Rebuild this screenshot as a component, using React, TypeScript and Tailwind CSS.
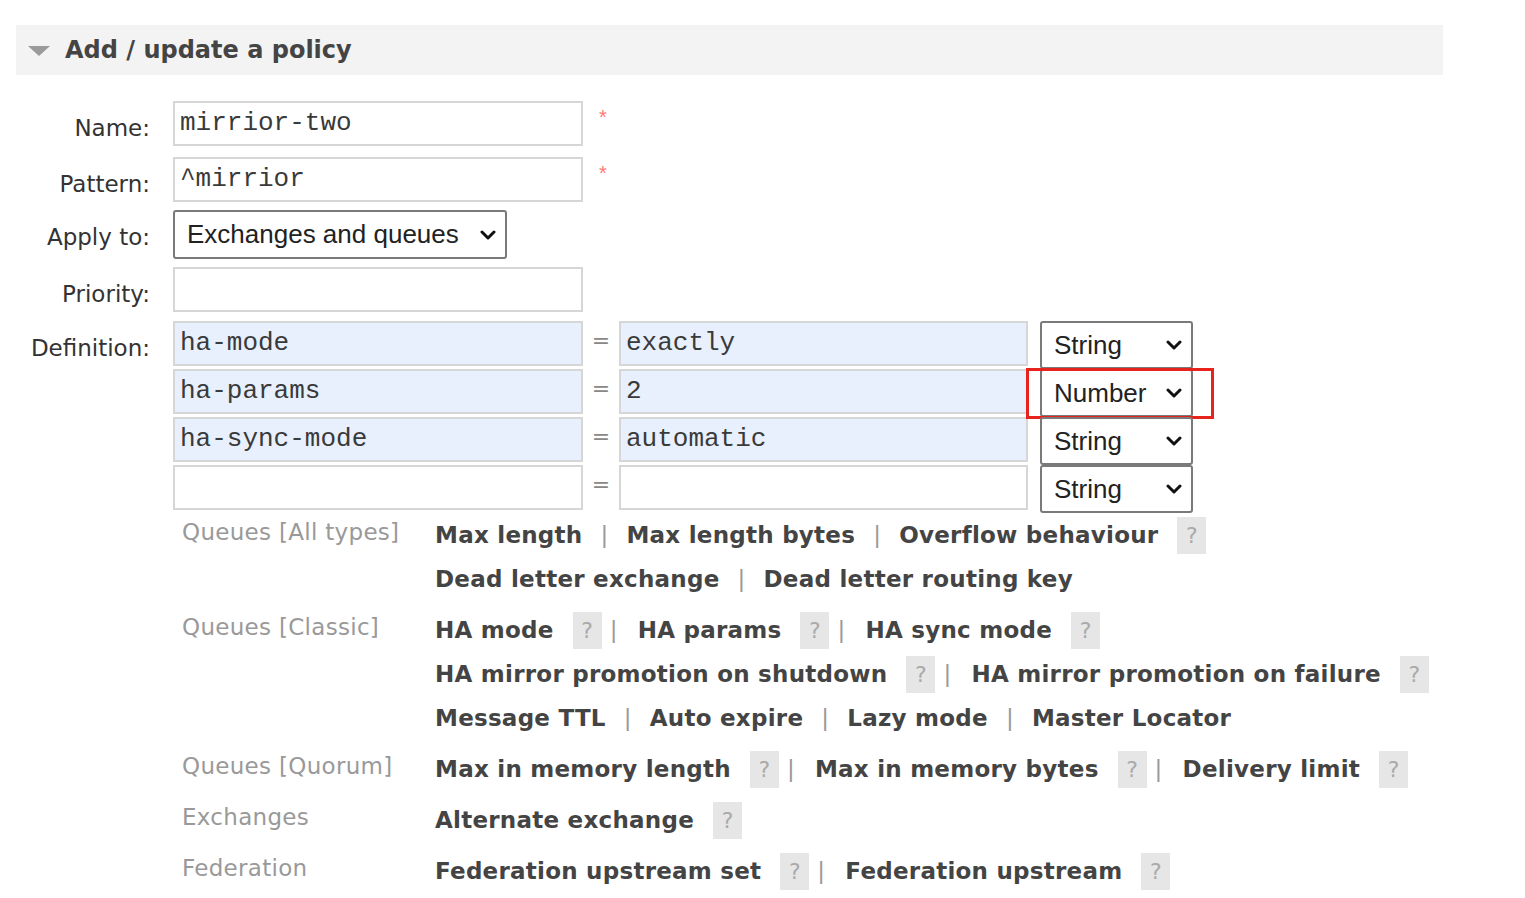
import React from 'react';

const sans = { fontFamily: '"DejaVu Sans", Verdana, sans-serif' };
const mono = { fontFamily: '"Liberation Mono", "Courier New", monospace' };
const arial = { fontFamily: '"Liberation Sans", Arial, sans-serif' };

function Field({ value = '', filled = false, width = 'w-[410px]' }: { value?: string; filled?: boolean; width?: string }) {
  return (
    <div
      className={`${width} h-[45px] border-2 border-[#d6d6d6] flex items-center px-[5px] text-[26px] text-[#3a3a3a] ${filled ? 'bg-[#e8f0fe]' : 'bg-white'}`}
      style={mono}
    >
      {value}
    </div>
  );
}

function Chevron() {
  return (
    <svg width="16" height="12" viewBox="0 0 16 12" className="shrink-0">
      <path d="M2 3 L8 9 L14 3" fill="none" stroke="#111" strokeWidth="3" strokeLinecap="round" strokeLinejoin="round" />
    </svg>
  );
}

function Select({ label, width, height = 'h-[48px]' }: { label: string; width: string; height?: string }) {
  return (
    <div
      className={`${width} ${height} border-2 border-[#7a7a7a] rounded-[3px] bg-white flex items-center justify-between pl-[12px] pr-[9px] text-[26px] text-[#222]`}
      style={arial}
    >
      <span>{label}</span>
      <Chevron />
    </div>
  );
}

function Help() {
  return (
    <span className="ml-[19px] inline-flex items-center justify-center w-[29px] h-[37px] bg-[#e6e6e6] text-[#aaa] text-[22px] font-normal tracking-normal">?</span>
  );
}

type Item = { t: string; h?: boolean };

function LinkLine({ items }: { items: Item[] }) {
  return (
    <div className="h-[44px] flex items-center text-[23px] font-bold text-[#444] whitespace-nowrap tracking-[0.25px]">
      {items.map((it, i) => (
        <React.Fragment key={it.t}>
          {i > 0 &&
            (items[i - 1].h ? (
              <span className="ml-[8px] mr-[20px] text-[#999] font-normal">|</span>
            ) : (
              <span className="mx-[18px] text-[#999] font-normal">|</span>
            ))}
          <span>{it.t}</span>
          {it.h && <Help />}
        </React.Fragment>
      ))}
    </div>
  );
}

function Group({ label, lines, first = false }: { label: string; lines: Item[][]; first?: boolean }) {
  return (
    <div className={`flex ${first ? '' : 'mt-[7px]'}`}>
      <div className="w-[253px] h-[38px] flex items-center text-[23px] text-[#999] tracking-[0.3px]">{label}</div>
      <div className="flex flex-col">
        {lines.map((l, i) => (
          <LinkLine key={i} items={l} />
        ))}
      </div>
    </div>
  );
}

function Row({ label, children, className = '' }: { label: string; children: React.ReactNode; className?: string }) {
  return (
    <div className={`flex items-start ${className}`}>
      <div className="w-[150px] text-right text-[23px] text-[#333] pt-[14px] leading-[27px]">{label}</div>
      <div className="ml-[23px]">{children}</div>
    </div>
  );
}

export default function App() {
  const defs = [
    { k: 'ha-mode', v: 'exactly', t: 'String' },
    { k: 'ha-params', v: '2', t: 'Number' },
    { k: 'ha-sync-mode', v: 'automatic', t: 'String' },
    { k: '', v: '', t: 'String' },
  ];

  return (
    <div className="w-[1525px] h-[898px] bg-white overflow-hidden" style={sans}>
      {/* Section header */}
      <div className="ml-[16px] mt-[25px] w-[1427px] h-[50px] bg-[#f3f3f3] flex items-center">
        <svg width="22" height="12" viewBox="0 0 22 12" className="ml-[12px] mt-[2px]">
          <path d="M0 1 L22 1 L11 11 Z" fill="#9a9a9a" />
        </svg>
        <span className="ml-[15px] text-[24px] font-bold text-[#444]">Add / update a policy</span>
      </div>

      {/* Form */}
      <div className="mt-[26px]">
        <Row label="Name:">
          <div className="flex items-start">
            <Field value="mirrior-two" />
            <span className="ml-[16px] text-[20px] text-[#f77] leading-[20px] mt-[6px]" style={arial}>*</span>
          </div>
        </Row>
        <Row label="Pattern:" className="mt-[11px]">
          <div className="flex items-start">
            <Field value="^mirrior" />
            <span className="ml-[16px] text-[20px] text-[#f77] leading-[20px] mt-[6px]" style={arial}>*</span>
          </div>
        </Row>
        <Row label="Apply to:" className="mt-[8px]">
          <Select label="Exchanges and queues" width="w-[334px]" height="h-[49px]" />
        </Row>
        <Row label="Priority:" className="mt-[8px]">
          <Field />
        </Row>
        <Row label="Definition:" className="mt-[9px]">
          <div className="flex flex-col">
            {defs.map((d, i) => (
              <div key={i} className="flex items-start h-[48px]">
                <Field value={d.k} filled={d.k !== ''} />
                <span className="w-[36px] text-center text-[22px] text-[#888] leading-[40px]">=</span>
                <Field value={d.v} filled={d.v !== ''} width="w-[409px]" />
                <div className="ml-[12px] relative">
                  <Select label={d.t} width="w-[153px]" />
                  {d.t === 'Number' && (
                    <div className="absolute left-[-14px] top-[-1px] w-[188px] h-[51px] border-[3px] border-[#e8221c]" />
                  )}
                </div>
              </div>
            ))}
          </div>
        </Row>

        {/* Help links */}
        <div className="ml-[182px] mt-[0px]">
          <Group
            first
            label="Queues [All types]"
            lines={[
              [{ t: 'Max length' }, { t: 'Max length bytes' }, { t: 'Overflow behaviour', h: true }],
              [{ t: 'Dead letter exchange' }, { t: 'Dead letter routing key' }],
            ]}
          />
          <Group
            label="Queues [Classic]"
            lines={[
              [{ t: 'HA mode', h: true }, { t: 'HA params', h: true }, { t: 'HA sync mode', h: true }],
              [{ t: 'HA mirror promotion on shutdown', h: true }, { t: 'HA mirror promotion on failure', h: true }],
              [{ t: 'Message TTL' }, { t: 'Auto expire' }, { t: 'Lazy mode' }, { t: 'Master Locator' }],
            ]}
          />
          <Group
            label="Queues [Quorum]"
            lines={[[{ t: 'Max in memory length', h: true }, { t: 'Max in memory bytes', h: true }, { t: 'Delivery limit', h: true }]]}
          />
          <Group label="Exchanges" lines={[[{ t: 'Alternate exchange', h: true }]]} />
          <Group label="Federation" lines={[[{ t: 'Federation upstream set', h: true }, { t: 'Federation upstream', h: true }]]} />
        </div>
      </div>
    </div>
  );
}
